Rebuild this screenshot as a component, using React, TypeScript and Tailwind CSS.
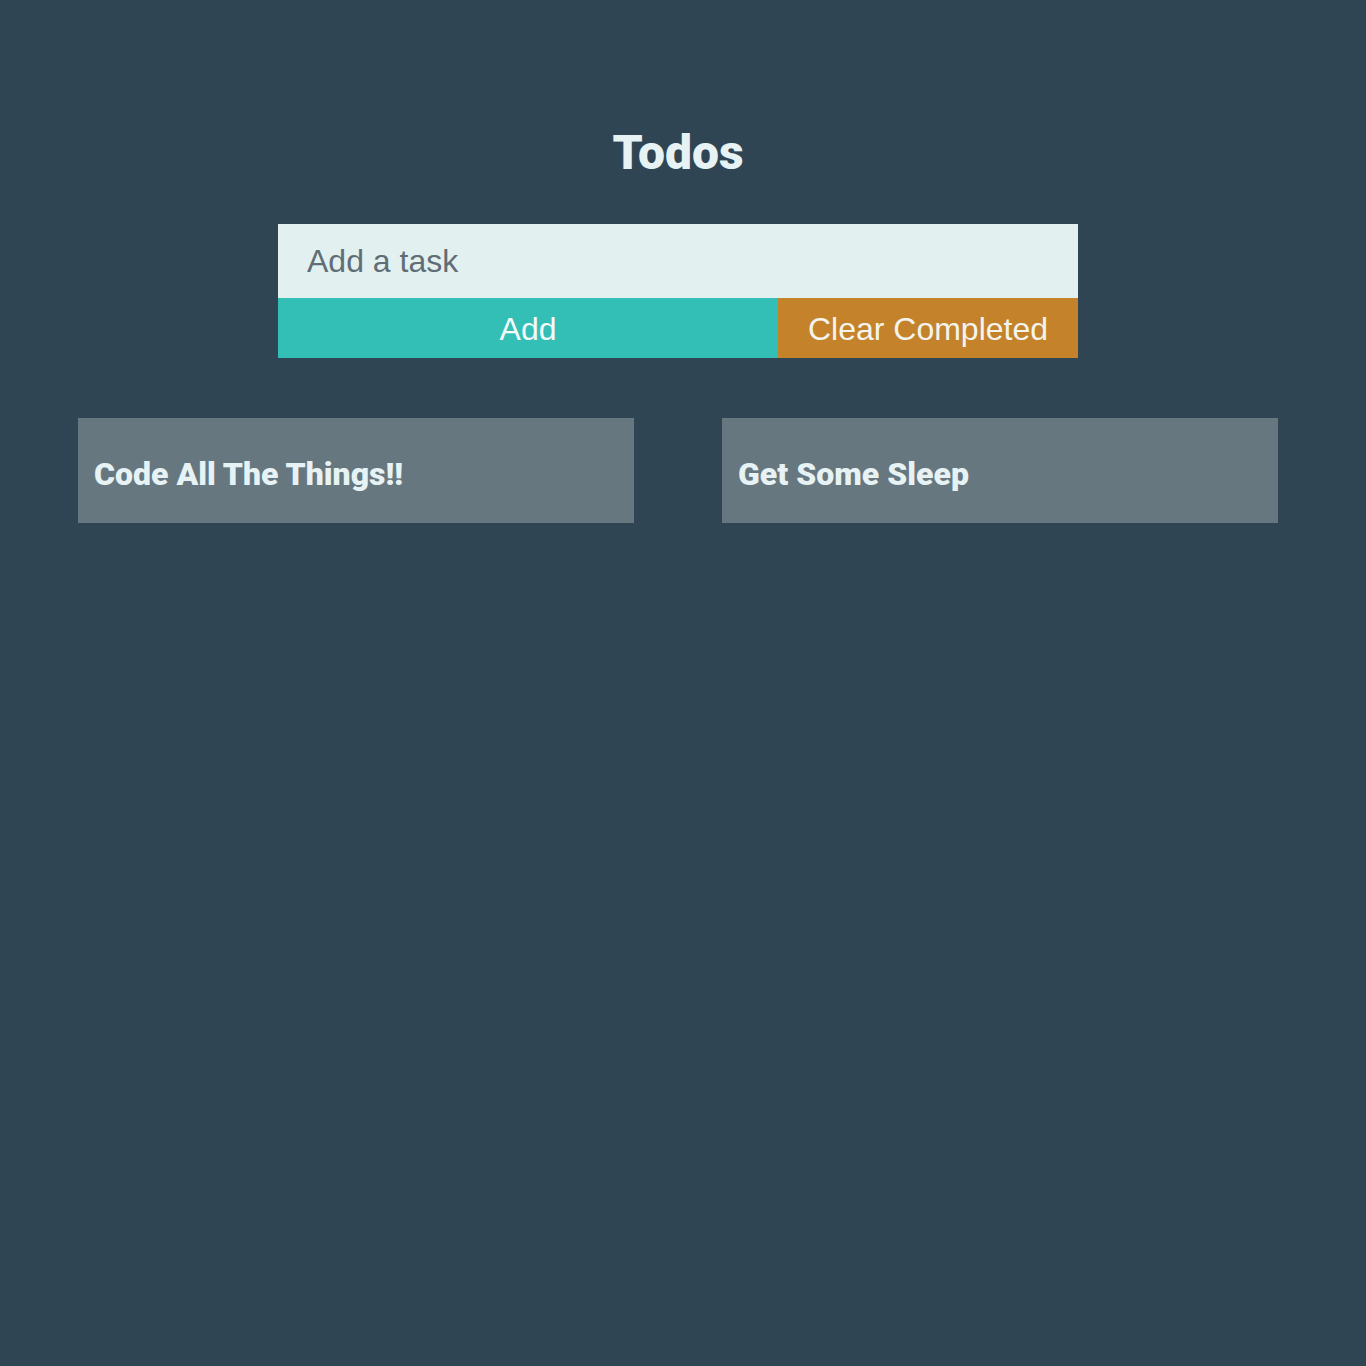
import React, { useState } from "react";

interface Todo {
  id: number;
  task: string;
  completed: boolean;
}

const initialTodos: Todo[] = [
  { id: 1, task: "Code All The Things!!", completed: false },
  { id: 2, task: "Get Some Sleep", completed: false },
];

export default function App() {
  const [todos, setTodos] = useState<Todo[]>(initialTodos);
  const [text, setText] = useState<string>("");

  const addTodo = () => {
    if (!text.trim()) return;
    setTodos([...todos, { id: Date.now(), task: text, completed: false }]);
    setText("");
  };

  const toggle = (id: number) => {
    setTodos(todos.map((t) => (t.id === id ? { ...t, completed: !t.completed } : t)));
  };

  const clearCompleted = () => setTodos(todos.filter((t) => !t.completed));

  return (
    <div className="min-h-[1366px] bg-[#2f4553]">
      <div className="w-[1356px] flex flex-col items-center pt-[123px]">
        {/* Title */}
        <h1 className="text-[#e6f2f4] text-[48px] leading-[60px] font-black font-['Roboto',sans-serif]">
          Todos
        </h1>

        {/* Form */}
        <div className="w-[800px] mt-[41px] flex flex-col">
          <input
            value={text}
            onChange={(e) => setText(e.target.value)}
            placeholder="Add a task"
            className="h-[74px] w-full bg-[#e3f0f0] px-[29px] text-[32px] text-[#2f4553] placeholder:text-[#5f6e76] font-['Liberation_Sans',Arial,sans-serif] outline-none"
          />
          <div className="flex h-[60px]">
            <button
              onClick={addTodo}
              className="flex-1 bg-[#33bfb5] text-[#f4fafa] text-[32px] pt-[2px] font-['Liberation_Sans',Arial,sans-serif]"
            >
              Add
            </button>
            <button
              onClick={clearCompleted}
              className="w-[300px] bg-[#c4832a] text-[#f4f4ee] text-[32px] pt-[2px] font-['Liberation_Sans',Arial,sans-serif]"
            >
              Clear Completed
            </button>
          </div>
        </div>

        {/* Todo list */}
        <div className="w-[1200px] mt-[60px] grid grid-cols-2 gap-x-[88px] gap-y-[30px]">
          {todos.map((todo) => (
            <div
              key={todo.id}
              onClick={() => toggle(todo.id)}
              className="h-[105px] bg-[#67777f] flex items-center px-4 pt-[6px] cursor-pointer"
            >
              <p
                className={`text-[32px] font-black text-[#e6f2f4] font-['Roboto',sans-serif] ${
                  todo.completed ? "line-through opacity-60" : ""
                }`}
              >
                {todo.task}
              </p>
            </div>
          ))}
        </div>
      </div>
    </div>
  );
}
